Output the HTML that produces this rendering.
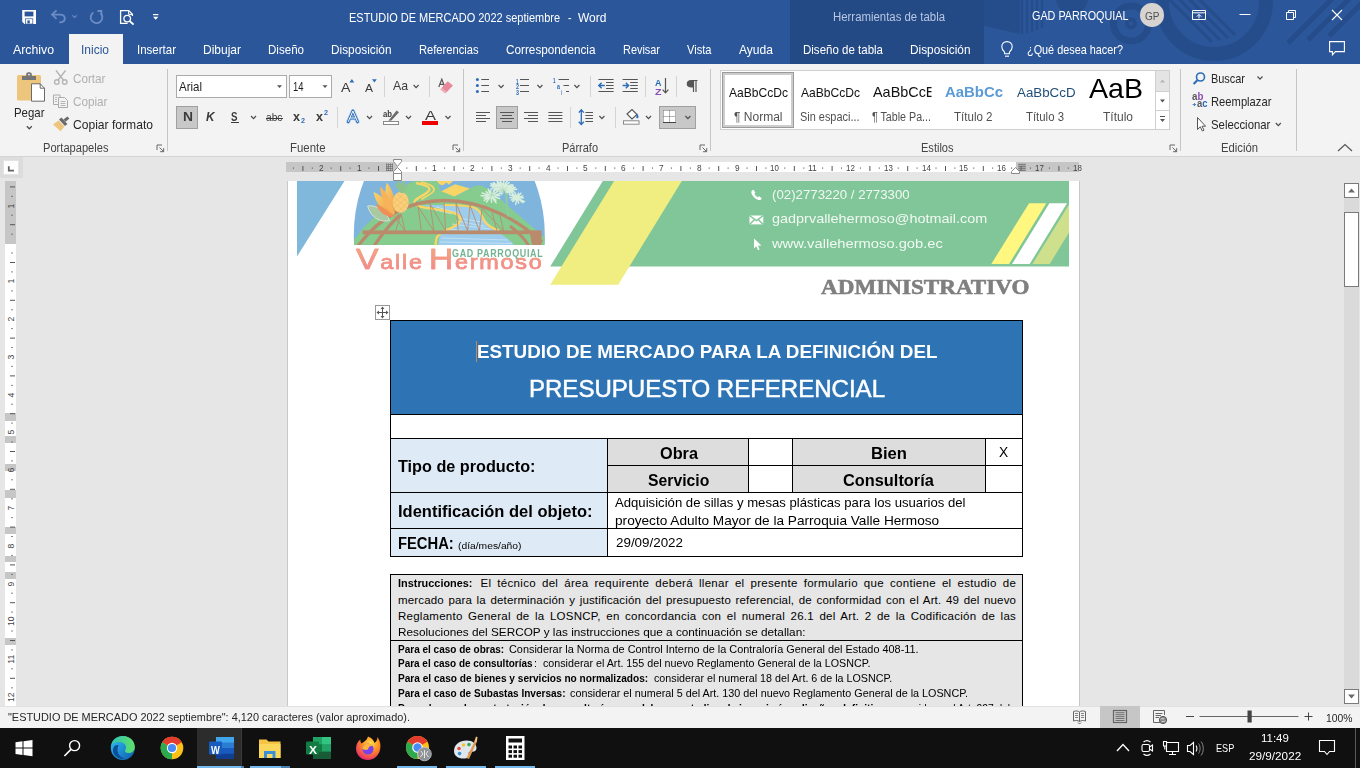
<!DOCTYPE html>
<html lang="es"><head><meta charset="utf-8"><title>ESTUDIO DE MERCADO 2022 septiembre - Word</title>
<style>
html,body{margin:0;padding:0;}
body{width:1360px;height:768px;overflow:hidden;position:relative;background:#e6e6e6;font-family:"Liberation Sans",sans-serif;}
div,span.t,svg{position:absolute;}
span.t{display:block;}
svg{overflow:visible;}
.clip{overflow:hidden;}
</style></head>
<body>
<!-- sec_title -->
<div style="left:0px;top:0px;width:1360px;height:64px;background:#2b579a;"></div>
<svg style="left:0px;top:0px;overflow:hidden;" width="1360" height="64" viewBox="0 0 1360 64">
<g fill="none" stroke="#264d8b">
 <circle cx="1214" cy="2" r="52" stroke-width="14"/>
 <circle cx="1131" cy="23.5" r="17.5" stroke-width="7"/>
 <circle cx="1131" cy="23.5" r="4" stroke-width="4"/>
 <circle cx="880" cy="74" r="60" stroke-width="5"/>
</g>
<g stroke="#264d8b" stroke-width="3">
 <path d="M1168 -2L1212 42M1178 -2L1220 40M1188 -2L1228 38M1198 -2L1235 35"/>
</g>
<g stroke="#264d8b" stroke-width="5">
 <path d="M1288 43L1333 -2M1308 40L1350 -2M1329 36L1366 -1"/>
</g>
<g stroke="#264d8b" stroke-width="2.4">
 <path d="M1022 0V34M1027 0V33M1032 0V32M1037 0V30M1042 0V28"/>
</g>
<path d="M984 0H1020V34L984 26Z" fill="#264d8b"/>
<circle cx="1072" cy="-2" r="16" fill="#264d8b"/>
</svg>
<div style="left:790px;top:0px;width:194px;height:64px;background:#244a85;"></div>
<div style="left:69px;top:34px;width:54px;height:30px;background:#f3f3f3;"></div>
<span class="t" style="left:349.3px;top:12.40px;font:400 12.4px/12.4px 'Liberation Sans', sans-serif;color:#ffffff;white-space:pre;transform-origin:0 50%;transform:scaleX(0.8856);">ESTUDIO DE MERCADO 2022 septiembre</span>
<span class="t" style="left:568px;top:12.40px;font:400 12.4px/12.4px 'Liberation Sans', sans-serif;color:#ffffff;white-space:pre;transform-origin:0 50%;transform:scaleX(0.8694);">-</span>
<span class="t" style="left:578.2px;top:12.40px;font:400 12.4px/12.4px 'Liberation Sans', sans-serif;color:#ffffff;white-space:pre;transform-origin:0 50%;transform:scaleX(0.9663);">Word</span>
<span class="t" style="left:832.5px;top:10.64px;font:400 12px/12px 'Liberation Sans', sans-serif;color:#b9c7e2;white-space:pre;transform-origin:0 50%;transform:scaleX(0.9487);">Herramientas de tabla</span>
<span class="t" style="left:1031.5px;top:10.07px;font:400 12.2px/12.2px 'Liberation Sans', sans-serif;color:#ffffff;white-space:pre;transform-origin:0 50%;transform:scaleX(0.8868);">GAD PARROQUIAL</span>
<div style="left:1140px;top:3px;width:23.6px;height:23.6px;background:#d6d3d1;border-radius:50%;"></div>
<span class="t" style="left:1144.5px;top:11.33px;font:400 10.6px/10.6px 'Liberation Sans', sans-serif;color:#505050;white-space:pre;transform-origin:0 50%;transform:scaleX(0.9469);">GP</span>
<span class="t" style="left:13px;top:44.17px;font:400 12.2px/12.2px 'Liberation Sans', sans-serif;color:#ffffff;white-space:pre;transform-origin:0 50%;transform:scaleX(1.0088);">Archivo</span>
<span class="t" style="left:81px;top:44.17px;font:400 12.2px/12.2px 'Liberation Sans', sans-serif;color:#2b579a;white-space:pre;transform-origin:0 50%;transform:scaleX(0.9841);">Inicio</span>
<span class="t" style="left:137px;top:44.17px;font:400 12.2px/12.2px 'Liberation Sans', sans-serif;color:#ffffff;white-space:pre;transform-origin:0 50%;transform:scaleX(0.9437);">Insertar</span>
<span class="t" style="left:203px;top:44.17px;font:400 12.2px/12.2px 'Liberation Sans', sans-serif;color:#ffffff;white-space:pre;transform-origin:0 50%;transform:scaleX(0.9838);">Dibujar</span>
<span class="t" style="left:268px;top:44.17px;font:400 12.2px/12.2px 'Liberation Sans', sans-serif;color:#ffffff;white-space:pre;transform-origin:0 50%;transform:scaleX(0.9489);">Diseño</span>
<span class="t" style="left:331px;top:44.17px;font:400 12.2px/12.2px 'Liberation Sans', sans-serif;color:#ffffff;white-space:pre;transform-origin:0 50%;transform:scaleX(0.9707);">Disposición</span>
<span class="t" style="left:419px;top:44.17px;font:400 12.2px/12.2px 'Liberation Sans', sans-serif;color:#ffffff;white-space:pre;transform-origin:0 50%;transform:scaleX(0.9147);">Referencias</span>
<span class="t" style="left:506px;top:44.17px;font:400 12.2px/12.2px 'Liberation Sans', sans-serif;color:#ffffff;white-space:pre;transform-origin:0 50%;transform:scaleX(0.9641);">Correspondencia</span>
<span class="t" style="left:623px;top:44.17px;font:400 12.2px/12.2px 'Liberation Sans', sans-serif;color:#ffffff;white-space:pre;transform-origin:0 50%;transform:scaleX(0.8956);">Revisar</span>
<span class="t" style="left:687px;top:44.17px;font:400 12.2px/12.2px 'Liberation Sans', sans-serif;color:#ffffff;white-space:pre;transform-origin:0 50%;transform:scaleX(0.9116);">Vista</span>
<span class="t" style="left:739px;top:44.17px;font:400 12.2px/12.2px 'Liberation Sans', sans-serif;color:#ffffff;white-space:pre;transform-origin:0 50%;transform:scaleX(0.9900);">Ayuda</span>
<span class="t" style="left:802.5px;top:44.17px;font:400 12.2px/12.2px 'Liberation Sans', sans-serif;color:#ffffff;white-space:pre;transform-origin:0 50%;transform:scaleX(0.9445);">Diseño de tabla</span>
<span class="t" style="left:910px;top:44.17px;font:400 12.2px/12.2px 'Liberation Sans', sans-serif;color:#ffffff;white-space:pre;transform-origin:0 50%;transform:scaleX(0.9707);">Disposición</span>
<span class="t" style="left:1027px;top:44.17px;font:400 12.2px/12.2px 'Liberation Sans', sans-serif;color:#ffffff;white-space:pre;transform-origin:0 50%;transform:scaleX(0.8911);">¿Qué desea hacer?</span>
<svg style="left:0px;top:0px;" width="1360" height="64" viewBox="0 0 1360 64">
<g fill="none" stroke="#fff" stroke-width="1.3">
 <!-- save: drawn below as filled shapes -->
 <!-- print preview -->
 <path d="M127.6 23.4H120.6V10.6H128.8L132.4 14.2V16" />
 <path d="M128.6 10.8V14.4H132.2" stroke-width="1"/>
 <circle cx="127.2" cy="18.6" r="3.3" />
 <path d="M129.6 21L133.6 24.6" stroke-width="1.9"/>
 <!-- window controls -->
 <path d="M1239.5 14.5H1250.5" stroke-width="1"/>
 <path d="M1286.5 12.5H1293.5V19.5H1286.5Z M1288.5 12.5V10.5H1295.5V17.5H1293.5" stroke-width="1"/>
 <path d="M1332 10L1342 20M1342 10L1332 20" stroke-width="1.1"/>
 <!-- ribbon display options -->
 <path d="M1192.5 10.5H1205.5V19.5H1192.5Z M1192.5 12.8H1205.5" stroke-width="1"/>
 <path d="M1199 18.4V14.6M1196.8 16.6L1199 14.4L1201.2 16.6" stroke-width="1"/>
 <!-- lightbulb -->
 <path d="M1004.6 52.2C1002.8 50.6 1001.8 49 1001.8 46.8C1001.8 43.6 1004.2 41.6 1007 41.6C1009.8 41.6 1012.2 43.6 1012.2 46.8C1012.2 49 1011.2 50.6 1009.4 52.2V53.8H1004.6Z" stroke-width="1.1"/>
 <path d="M1005 56.2H1009" stroke-width="1.1"/>
 <!-- comments -->
 <path d="M1329.6 41.6H1344.4V51.6H1335.4L1332.4 54.8V51.6H1329.6Z" stroke-width="1.1"/>
</g>
<g fill="none" stroke="#6d8cc6" stroke-width="1.8">
 <!-- undo (disabled) -->
 <path d="M52.4 14.6H60C63.2 14.6 64.8 16.4 64.8 18.4C64.8 20.6 63 22.2 59.4 22.4" />
 <path d="M56.6 10.4L52 14.6L56.6 18.8" />
 <path d="M72.4 15.4L74.6 17.4L76.8 15.4" stroke-width="1.1"/>
 <!-- redo (disabled) -->
 <path d="M100.6 13.2A5.8 5.8 0 1 1 93.4 12.4" />
 <path d="M97.4 11H101.4V15" />
</g>
<path d="M22.2 10H36V24H24.4L22.2 21.8Z" fill="#fff"/><rect x="24.6" y="11.6" width="8.8" height="4.8" fill="#2b579a"/><rect x="25.4" y="18.8" width="7.4" height="5.2" fill="none" stroke="#2b579a" stroke-width="0.7"/><rect x="27.4" y="20.4" width="2.4" height="2.9" fill="#2b579a"/>
<g fill="#fff">
 <rect x="153" y="14" width="5.4" height="1.2"/>
 <path d="M153 16.8H158.4L155.7 19.8Z"/>
</g>
</svg>
<!-- sec_ribbon -->
<div style="left:0px;top:64px;width:1360px;height:92px;background:#f3f3f3;"></div>
<div style="left:0px;top:156px;width:1360px;height:1px;background:#d4d4d4;"></div>
<div style="left:167.0px;top:69px;width:1px;height:82px;background:#c6c6c6;"></div>
<div style="left:463.0px;top:69px;width:1px;height:82px;background:#c6c6c6;"></div>
<div style="left:710.0px;top:69px;width:1px;height:82px;background:#c6c6c6;"></div>
<div style="left:1179.5px;top:69px;width:1px;height:82px;background:#c6c6c6;"></div>
<div style="left:1296.0px;top:69px;width:1px;height:82px;background:#c6c6c6;"></div>
<div style="left:384.0px;top:76px;width:1px;height:21px;background:#d4d4d4;"></div>
<div style="left:429.0px;top:76px;width:1px;height:21px;background:#d4d4d4;"></div>
<div style="left:590.0px;top:76px;width:1px;height:21px;background:#d4d4d4;"></div>
<div style="left:645.0px;top:76px;width:1px;height:21px;background:#d4d4d4;"></div>
<div style="left:676.0px;top:76px;width:1px;height:21px;background:#d4d4d4;"></div>
<div style="left:337.0px;top:107px;width:1px;height:21px;background:#d4d4d4;"></div>
<div style="left:570.0px;top:107px;width:1px;height:21px;background:#d4d4d4;"></div>
<div style="left:614.5px;top:107px;width:1px;height:21px;background:#d4d4d4;"></div>
<span class="t" style="left:14px;top:107.07px;font:400 12.2px/12.2px 'Liberation Sans', sans-serif;color:#262626;white-space:pre;transform-origin:0 50%;transform:scaleX(0.9376);">Pegar</span>
<span class="t" style="left:72.5px;top:73.07px;font:400 12.2px/12.2px 'Liberation Sans', sans-serif;color:#b0b0b0;white-space:pre;transform-origin:0 50%;transform:scaleX(0.9594);">Cortar</span>
<span class="t" style="left:72.5px;top:96.07px;font:400 12.2px/12.2px 'Liberation Sans', sans-serif;color:#b0b0b0;white-space:pre;transform-origin:0 50%;transform:scaleX(0.9608);">Copiar</span>
<span class="t" style="left:72.5px;top:119.27px;font:400 12.2px/12.2px 'Liberation Sans', sans-serif;color:#262626;white-space:pre;transform-origin:0 50%;transform:scaleX(0.9924);">Copiar formato</span>
<span class="t" style="left:42.5px;top:142.34px;font:400 12px/12px 'Liberation Sans', sans-serif;color:#444444;white-space:pre;transform-origin:0 50%;transform:scaleX(0.9262);">Portapapeles</span>
<span class="t" style="left:290px;top:142.34px;font:400 12px/12px 'Liberation Sans', sans-serif;color:#444444;white-space:pre;transform-origin:0 50%;transform:scaleX(0.9502);">Fuente</span>
<span class="t" style="left:561.5px;top:142.34px;font:400 12px/12px 'Liberation Sans', sans-serif;color:#444444;white-space:pre;transform-origin:0 50%;transform:scaleX(0.9146);">Párrafo</span>
<span class="t" style="left:921px;top:142.34px;font:400 12px/12px 'Liberation Sans', sans-serif;color:#444444;white-space:pre;transform-origin:0 50%;transform:scaleX(0.9195);">Estilos</span>
<span class="t" style="left:1220.5px;top:142.34px;font:400 12px/12px 'Liberation Sans', sans-serif;color:#444444;white-space:pre;transform-origin:0 50%;transform:scaleX(0.9401);">Edición</span>
<div style="left:176px;top:75px;width:110.5px;height:22.5px;background:#fff;box-sizing:border-box;border:1px solid #ababab;"></div>
<div style="left:289px;top:75px;width:42.7px;height:22.5px;background:#fff;box-sizing:border-box;border:1px solid #ababab;"></div>
<span class="t" style="left:179px;top:81.17px;font:400 12.2px/12.2px 'Liberation Sans', sans-serif;color:#1e1e1e;white-space:pre;transform-origin:0 50%;transform:scaleX(0.9430);">Arial</span>
<span class="t" style="left:293px;top:81.17px;font:400 12.2px/12.2px 'Liberation Sans', sans-serif;color:#1e1e1e;white-space:pre;transform-origin:0 50%;transform:scaleX(0.7742);">14</span>
<div style="left:176px;top:106px;width:22px;height:23px;background:#c8c8c8;box-sizing:border-box;border:1px solid #a0a0a0;"></div>
<div style="left:496px;top:106px;width:22px;height:23px;background:#c8c8c8;box-sizing:border-box;border:1px solid #a0a0a0;"></div>
<div style="left:659px;top:106px;width:36.5px;height:23px;background:#c8c8c8;box-sizing:border-box;border:1px solid #a0a0a0;"></div>
<span class="t" style="left:182.5px;top:111.03px;font:700 12.6px/12.6px 'Liberation Sans', sans-serif;color:#3b3b3b;white-space:pre;transform-origin:0 50%;transform:scaleX(1.0978);">N</span>
<span class="t" style="left:206px;top:111.03px;font:italic 700 12.6px/12.6px 'Liberation Sans', sans-serif;color:#3b3b3b;white-space:pre;transform-origin:0 50%;transform:scaleX(0.9331);">K</span>
<span class="t" style="left:231px;top:110.97px;font:700 12.2px/12.2px 'Liberation Sans', sans-serif;color:#3b3b3b;white-space:pre;transform-origin:0 50%;transform:scaleX(0.7985);">S</span>
<div style="left:230.5px;top:122px;width:8px;height:1px;background:#3b3b3b;"></div>
<span class="t" style="left:266px;top:112.06px;font:400 10.8px/10.8px 'Liberation Sans', sans-serif;color:#3b3b3b;white-space:pre;transform-origin:0 50%;transform:scaleX(0.9471);">abc</span>
<div style="left:265.5px;top:117.5px;width:17.5px;height:1px;background:#3b3b3b;"></div>
<span class="t" style="left:292.5px;top:110.20px;font:700 13px/13px 'Liberation Sans', sans-serif;color:#3b3b3b;white-space:pre;transform-origin:0 50%;transform:scaleX(0.9676);">x</span>
<span class="t" style="left:300.5px;top:118.20px;font:700 6.5px/6.5px 'Liberation Sans', sans-serif;color:#2b6cb8;white-space:pre;transform-origin:0 50%;transform:scaleX(1.1034);">2</span>
<span class="t" style="left:316px;top:110.20px;font:700 13px/13px 'Liberation Sans', sans-serif;color:#3b3b3b;white-space:pre;transform-origin:0 50%;transform:scaleX(0.9676);">x</span>
<span class="t" style="left:324px;top:110.10px;font:700 6.5px/6.5px 'Liberation Sans', sans-serif;color:#2b6cb8;white-space:pre;transform-origin:0 50%;transform:scaleX(1.1034);">2</span>
<span class="t" style="left:340.5px;top:81.07px;font:400 13.5px/13.5px 'Liberation Sans', sans-serif;color:#3b3b3b;white-space:pre;transform-origin:0 50%;transform:scaleX(1.0537);">A</span>
<span class="t" style="left:365px;top:83.19px;font:400 11px/11px 'Liberation Sans', sans-serif;color:#3b3b3b;white-space:pre;transform-origin:0 50%;transform:scaleX(1.0894);">A</span>
<span class="t" style="left:392.5px;top:79.30px;font:400 13px/13px 'Liberation Sans', sans-serif;color:#3b3b3b;white-space:pre;transform-origin:0 50%;transform:scaleX(0.9430);">Aa</span>
<div style="left:720px;top:70px;width:450px;height:60px;background:#fff;box-sizing:border-box;border:1px solid #cfcfcf;"></div>
<div style="left:722px;top:72px;width:72px;height:56px;background:#fff;box-sizing:border-box;border:1px solid #9a9a9a;box-shadow:inset 0 0 0 2px #cdcdcd;"></div>
<div style="left:1155px;top:70px;width:15px;height:22px;background:#e4e4e4;box-sizing:border-box;border:1px solid #cfcfcf;"></div>
<div style="left:1155px;top:91px;width:15px;height:20px;background:#fff;box-sizing:border-box;border:1px solid #cfcfcf;"></div>
<div style="left:1155px;top:110px;width:15px;height:20px;background:#fff;box-sizing:border-box;border:1px solid #cfcfcf;"></div>
<span class="t" style="left:728.5px;top:87.27px;font:400 12.2px/12.2px 'Liberation Sans', sans-serif;color:#111;white-space:pre;transform-origin:0 50%;transform:scaleX(0.9898);">AaBbCcDc</span>
<span class="t" style="left:733.5px;top:111.34px;font:400 12px/12px 'Liberation Sans', sans-serif;color:#505050;white-space:pre;transform-origin:0 50%;transform:scaleX(1.0010);">¶ Normal</span>
<span class="t" style="left:800.5px;top:87.27px;font:400 12.2px/12.2px 'Liberation Sans', sans-serif;color:#111;white-space:pre;transform-origin:0 50%;transform:scaleX(0.9898);">AaBbCcDc</span>
<span class="t" style="left:800px;top:111.34px;font:400 12px/12px 'Liberation Sans', sans-serif;color:#505050;white-space:pre;transform-origin:0 50%;transform:scaleX(0.9101);">Sin espaci...</span>
<span class="t" style="left:872.5px;top:85.33px;font:400 14.5px/14.5px 'Liberation Sans', sans-serif;color:#111;white-space:pre;transform-origin:0 50%;transform:scaleX(0.9940);clip-path:inset(0 4px 0 0);">AaBbCcE</span>
<span class="t" style="left:872px;top:111.34px;font:400 12px/12px 'Liberation Sans', sans-serif;color:#505050;white-space:pre;transform-origin:0 50%;transform:scaleX(0.8904);">¶ Table Pa...</span>
<span class="t" style="left:944.5px;top:83.50px;font:700 15px/15px 'Liberation Sans', sans-serif;color:#5b9bd5;white-space:pre;transform-origin:0 50%;transform:scaleX(0.9938);">AaBbCc</span>
<span class="t" style="left:954px;top:111.34px;font:400 12px/12px 'Liberation Sans', sans-serif;color:#505050;white-space:pre;transform-origin:0 50%;transform:scaleX(0.9617);">Título 2</span>
<span class="t" style="left:1016.5px;top:85.53px;font:400 13.2px/13.2px 'Liberation Sans', sans-serif;color:#1f4e79;white-space:pre;transform-origin:0 50%;transform:scaleX(1.0103);">AaBbCcD</span>
<span class="t" style="left:1026px;top:111.34px;font:400 12px/12px 'Liberation Sans', sans-serif;color:#505050;white-space:pre;transform-origin:0 50%;transform:scaleX(0.9493);">Título 3</span>
<span class="t" style="left:1089px;top:74.80px;font:400 28px/28px 'Liberation Sans', sans-serif;color:#000;white-space:pre;transform-origin:0 50%;transform:scaleX(1.0201);">AaB</span>
<span class="t" style="left:1102.5px;top:111.34px;font:400 12px/12px 'Liberation Sans', sans-serif;color:#505050;white-space:pre;transform-origin:0 50%;transform:scaleX(0.9995);">Título</span>
<span class="t" style="left:1211.2px;top:73.17px;font:400 12.2px/12.2px 'Liberation Sans', sans-serif;color:#262626;white-space:pre;transform-origin:0 50%;transform:scaleX(0.8962);">Buscar</span>
<span class="t" style="left:1211.2px;top:95.97px;font:400 12.2px/12.2px 'Liberation Sans', sans-serif;color:#262626;white-space:pre;transform-origin:0 50%;transform:scaleX(0.9191);">Reemplazar</span>
<span class="t" style="left:1211.2px;top:118.77px;font:400 12.2px/12.2px 'Liberation Sans', sans-serif;color:#262626;white-space:pre;transform-origin:0 50%;transform:scaleX(0.9327);">Seleccionar</span>
<svg style="left:0px;top:0px;" width="1360" height="156" viewBox="0 0 1360 156"><rect x="17" y="75" width="24" height="25.5" rx="1.5" fill="#eec57c"/>
<path d="M22 80V76H26.2V74C26.2 72.8 27.4 72.2 29 72.2C30.6 72.2 31.8 72.8 31.8 74V76H36V80Z" fill="#767676"/>
<circle cx="29" cy="74.6" r="0.9" fill="#f3f3f3"/>
<path d="M31.5 83.8H40.2L44.5 88.2V101.2H31.5Z" fill="#fff" stroke="#6a6a6a" stroke-width="1"/>
<path d="M40.2 83.8V88.2H44.5" fill="none" stroke="#6a6a6a" stroke-width="1"/>
<path d="M26.8 126.2L29.3 128.8L31.8 126.2" fill="none" stroke="#4f4f4f" stroke-width="1.25"/>
<g fill="none" stroke="#b5b5b5" stroke-width="1.4"><path d="M56 70.5L63.8 80.5M65.5 70.5L57.7 80.5"/><circle cx="56.8" cy="82" r="2.3"/><circle cx="64.7" cy="82" r="2.3"/></g>
<g fill="#f3f3f3" stroke="#ababab" stroke-width="1"><path d="M53.5 95H60V104.5H53.5Z"/><path d="M58.5 97.5H64.5L67.5 100.5V107.5H58.5Z"/></g><path d="M55 97.5H57M55 99.5H57M55 101.5H57M60.5 101.5H65.5M60.5 103.5H65.5M60.5 105.5H65.5" stroke="#b5b5b5" stroke-width="1"/>
<path d="M53 124.4L58.6 120.6L64.4 126.6L60.6 131.2Z" fill="#eec57c"/><path d="M59 119.6L61.4 117.6L67.4 124L65 126Z" fill="#6a6a6a"/><path d="M63.4 119.6L67.4 116.4L69.4 118.6L65.6 121.8Z" fill="#6a6a6a"/>
<path d="M157.0 150.0V145.0H162.0" fill="none" stroke="#666" stroke-width="1"/><path d="M159.5 147.5L163.5 151.5M163.7 148.1V151.7H160.1" fill="none" stroke="#666" stroke-width="1"/>
<path d="M453.0 150.0V145.0H458.0" fill="none" stroke="#666" stroke-width="1"/><path d="M455.5 147.5L459.5 151.5M459.7 148.1V151.7H456.1" fill="none" stroke="#666" stroke-width="1"/>
<path d="M700.0 150.0V145.0H705.0" fill="none" stroke="#666" stroke-width="1"/><path d="M702.5 147.5L706.5 151.5M706.7 148.1V151.7H703.1" fill="none" stroke="#666" stroke-width="1"/>
<path d="M1170.0 150.0V145.0H1175.0" fill="none" stroke="#666" stroke-width="1"/><path d="M1172.5 147.5L1176.5 151.5M1176.7 148.1V151.7H1173.1" fill="none" stroke="#666" stroke-width="1"/>
<path d="M277 85.2H282L279.5 88Z" fill="#555"/><path d="M322.5 85.2H327.5L325 88Z" fill="#555"/>
<path d="M251 116L253.5 118.6L256 116" fill="none" stroke="#4f4f4f" stroke-width="1.25"/>
<path d="M413.6 85L416.1 87.6L418.6 85" fill="none" stroke="#4f4f4f" stroke-width="1.25"/>
<path d="M367 116L369.5 118.6L372 116" fill="none" stroke="#4f4f4f" stroke-width="1.25"/>
<path d="M406 116L408.5 118.6L411 116" fill="none" stroke="#4f4f4f" stroke-width="1.25"/>
<path d="M445.5 116L448.0 118.6L450.5 116" fill="none" stroke="#4f4f4f" stroke-width="1.25"/>
<path d="M498.6 85L501.1 87.6L503.6 85" fill="none" stroke="#4f4f4f" stroke-width="1.25"/>
<path d="M537.4 85L539.9 87.6L542.4 85" fill="none" stroke="#4f4f4f" stroke-width="1.25"/>
<path d="M574.4 85L576.9 87.6L579.4 85" fill="none" stroke="#4f4f4f" stroke-width="1.25"/>
<path d="M599.4 116L601.9 118.6L604.4 116" fill="none" stroke="#4f4f4f" stroke-width="1.25"/>
<path d="M646 116L648.5 118.6L651 116" fill="none" stroke="#4f4f4f" stroke-width="1.25"/>
<path d="M685.4 116L687.9 118.6L690.4 116" fill="none" stroke="#4f4f4f" stroke-width="1.25"/>
<path d="M1257.5 76.5L1260.0 79.1L1262.5 76.5" fill="none" stroke="#4f4f4f" stroke-width="1.25"/>
<path d="M1275.8 123L1278.3 125.6L1280.8 123" fill="none" stroke="#4f4f4f" stroke-width="1.25"/>
<path d="M349.5 82.5H354.3L351.9 79Z" fill="#2b6cb8"/><path d="M372 79.2H376.8L374.4 82.5Z" fill="#2b6cb8"/>
<path d="M438.8 87L441.8 79.2L444.8 87M439.8 84.4H443.8" fill="none" stroke="#5a5a5a" stroke-width="1.2"/><path d="M447.6 81.3L453 85.6L446.6 92.2L441.6 88Z" fill="#e8899a"/><path d="M441.6 88L446.6 92.2L445.2 93.6L440.2 89.4Z" fill="#f0aab6"/>
<path d="M348.2 121.8L352.9 111L357.6 121.8M350 118H355.8" fill="none" stroke="#c3dbf3" stroke-width="4.4" stroke-linejoin="round" stroke-linecap="round"/><path d="M348.2 121.8L352.9 111L357.6 121.8M350 118H355.8" fill="none" stroke="#2b6cb8" stroke-width="2.8" stroke-linejoin="round" stroke-linecap="round"/><path d="M348.2 121.8L352.9 111L357.6 121.8M350 118H355.8" fill="none" stroke="#fff" stroke-width="1"/>
<rect x="383.5" y="121.5" width="15" height="3" fill="#fff" stroke="#8a8a8a" stroke-width="1"/><path d="M396.6 110.4L399 112.2L391.4 120.6L388.4 120.8Z" fill="#6a6a6a"/>
<rect x="422" y="121" width="16" height="4" fill="#ee0000"/>
<circle cx="477.4" cy="79.5" r="1.5" fill="#2b6cb8"/><path d="M481.3 79.5H489" stroke="#555" stroke-width="1"/>
<path d="M520 79.5H529" stroke="#555" stroke-width="1"/>
<circle cx="477.4" cy="85.5" r="1.5" fill="#2b6cb8"/><path d="M481.3 85.5H489" stroke="#555" stroke-width="1"/>
<path d="M520 85.5H529" stroke="#555" stroke-width="1"/>
<circle cx="477.4" cy="91.5" r="1.5" fill="#2b6cb8"/><path d="M481.3 91.5H489" stroke="#555" stroke-width="1"/>
<path d="M520 91.5H529" stroke="#555" stroke-width="1"/>
<path d="M558.5 79.5H569M563.5 85.5H569M566 91.5H569" stroke="#555" stroke-width="1"/>
<path d="M598.4 79.5H613.6M606.0 82.5H613.6M606.0 85.5H613.6M606.0 88.5H613.6M598.4 91.5H613.6" stroke="#555" stroke-width="1"/>
<path d="M604.8 85.5H599.0M601.6 82.8L598.8 85.5L601.6 88.2" stroke="#2b6cb8" stroke-width="1.4" fill="none"/>
<path d="M622.6 79.5H637.8000000000001M630.2 82.5H637.8000000000001M630.2 85.5H637.8000000000001M630.2 88.5H637.8000000000001M622.6 91.5H637.8000000000001" stroke="#555" stroke-width="1"/>
<path d="M622.6 85.5H628.4M625.8000000000001 82.8L628.6 85.5L625.8000000000001 88.2" stroke="#2b6cb8" stroke-width="1.4" fill="none"/>
<path d="M665.5 78V92.5M662.6 89.6L665.5 92.8L668.4 89.6" stroke="#555" stroke-width="1.2" fill="none"/>
<path d="M476.0 112.5H490.0M476.0 115.5H486.0M476.0 118.5H490.0M476.0 121.5H486.0" stroke="#555" stroke-width="1"/>
<path d="M500.0 112.5H514.0M502.0 115.5H512.0M500.0 118.5H514.0M502.0 121.5H512.0" stroke="#555" stroke-width="1"/>
<path d="M524.0 112.5H538.0M528.0 115.5H538.0M524.0 118.5H538.0M528.0 121.5H538.0" stroke="#555" stroke-width="1"/>
<path d="M548.4 112.5H562.4M548.4 115.5H562.4M548.4 118.5H562.4M548.4 121.5H562.4" stroke="#555" stroke-width="1"/>
<path d="M585.4 112.5H593.0M585.4 115.5H593.0M585.4 118.5H593.0M585.4 121.5H593.0" stroke="#555" stroke-width="1"/>
<path d="M581.3 110V124.4M578.8 112.6L581.3 109.8L583.8 112.6M578.8 121.8L581.3 124.6L583.8 121.8" stroke="#2b6cb8" stroke-width="1.3" fill="none"/>
<rect x="623.5" y="120.8" width="15.5" height="3.4" fill="#fff" stroke="#8a8a8a" stroke-width="1"/><path d="M627 114L632 109.5L637 114.5L632 119Z" fill="#fff" stroke="#555" stroke-width="1.1"/><path d="M637 113.5C638.6 115.5 639 117 638 118C637 118.8 635.8 118 636.4 116.4Z" fill="#2b6cb8"/>
<rect x="663" y="110" width="13" height="12.5" fill="#fff"/><path d="M663.5 110.5H675.5M663.5 110.5V122M675.5 110.5V122M669.5 110.5V122M663.5 116.5H675.5" fill="none" stroke="#666" stroke-width="1" stroke-dasharray="1 1"/><path d="M663 122.5H676" stroke="#444" stroke-width="1"/>
<path d="M693.5 92V80.5M696 92V80.5M697.5 80.5H691.5C688.8 80.5 687.3 82 687.3 83.8C687.3 85.6 688.8 87 691.5 87H693.5" fill="none" stroke="#555" stroke-width="1.2"/><path d="M691.5 80.5C688.8 80.5 687.3 82 687.3 83.8C687.3 85.6 688.8 87 691.5 87H693.5V80.5Z" fill="#555"/>
<path d="M1160 82.5H1165L1162.5 79.5Z" fill="#b5b5b5"/><path d="M1160 99.5H1165L1162.5 102.5Z" fill="#555"/><path d="M1160 116.5H1165" stroke="#555" stroke-width="1"/><path d="M1160 119H1165L1162.5 122Z" fill="#555"/><path d="M1192.6 104.6H1195.4M1194 103.2L1195.6 104.6L1194 106" stroke="#2b6cb8" stroke-width="0.9" fill="none"/>
<circle cx="1200.5" cy="77" r="4" fill="none" stroke="#2b6cb8" stroke-width="1.6"/><path d="M1197.6 80L1193.6 84" stroke="#2b6cb8" stroke-width="2"/>
<path d="M1197.5 117.5V129.5L1200.3 126.8L1202.3 131L1204 130.2L1202 126.2H1205.6Z" fill="#fff" stroke="#555" stroke-width="1"/>
<path d="M1338 151L1345 144.5L1352 151" fill="none" stroke="#555" stroke-width="1.2"/></svg>
<span class="t" style="left:425px;top:109.82px;font:400 12.5px/12.5px 'Liberation Sans', sans-serif;color:#3b3b3b;white-space:pre;transform-origin:0 50%;transform:scaleX(1.3184);">A</span>
<span class="t" style="left:383px;top:110.22px;font:700 8.6px/8.6px 'Liberation Sans', sans-serif;color:#3b3b3b;white-space:pre;transform-origin:0 50%;transform:scaleX(0.8972);">ab</span>
<span class="t" style="left:516px;top:78.50px;font:700 6.5px/6.5px 'Liberation Sans', sans-serif;color:#2b6cb8;white-space:pre;transform-origin:0 50%;transform:scaleX(0.6897);">1</span>
<span class="t" style="left:516px;top:84.00px;font:700 6.5px/6.5px 'Liberation Sans', sans-serif;color:#2b6cb8;white-space:pre;transform-origin:0 50%;transform:scaleX(0.8276);">2</span>
<span class="t" style="left:516px;top:89.50px;font:700 6.5px/6.5px 'Liberation Sans', sans-serif;color:#2b6cb8;white-space:pre;transform-origin:0 50%;transform:scaleX(0.8276);">3</span>
<span class="t" style="left:553px;top:78.00px;font:700 6.5px/6.5px 'Liberation Sans', sans-serif;color:#2b6cb8;white-space:pre;transform-origin:0 50%;transform:scaleX(0.6897);">1</span>
<span class="t" style="left:557px;top:84.00px;font:700 6.5px/6.5px 'Liberation Sans', sans-serif;color:#2b6cb8;white-space:pre;transform-origin:0 50%;transform:scaleX(0.8276);">a</span>
<span class="t" style="left:561px;top:90.00px;font:700 6.5px/6.5px 'Liberation Sans', sans-serif;color:#2b6cb8;white-space:pre;transform-origin:0 50%;transform:scaleX(0.5517);">i</span>
<span class="t" style="left:655px;top:78.46px;font:700 9.5px/9.5px 'Liberation Sans', sans-serif;color:#2b6cb8;white-space:pre;transform-origin:0 50%;transform:scaleX(0.9455);">A</span>
<span class="t" style="left:655px;top:86.96px;font:700 9.5px/9.5px 'Liberation Sans', sans-serif;color:#8a4fb5;white-space:pre;transform-origin:0 50%;transform:scaleX(1.1183);">Z</span>
<span class="t" style="left:1192.2px;top:92.20px;font:700 10.4px/10.4px 'Liberation Sans', sans-serif;color:#8a4fb5;white-space:pre;transform-origin:0 50%;transform:scaleX(0.9390);"><span style="color:#5a5a5a">a</span>b</span>
<span class="t" style="left:1197.3px;top:99.30px;font:700 10.4px/10.4px 'Liberation Sans', sans-serif;color:#2b6cb8;white-space:pre;transform-origin:0 50%;transform:scaleX(0.9081);"><span style="color:#5a5a5a">a</span>c</span>
<!-- sec_doc -->
<div style="left:0px;top:157px;width:1360px;height:549px;background:#e6e6e6;"></div>
<div style="left:286px;top:162px;width:793px;height:10px;background:#c6c6c6;"></div>
<div style="left:397px;top:162px;width:618.5px;height:10px;background:#ffffff;"></div>
<span class="t" style="left:318.8px;top:164.22px;font:400 8.6px/8.6px 'Liberation Sans', sans-serif;color:#444;white-space:pre;transform-origin:0 50%;transform:scaleX(0.9621);">2</span>
<span class="t" style="left:356.6px;top:164.22px;font:400 8.6px/8.6px 'Liberation Sans', sans-serif;color:#444;white-space:pre;transform-origin:0 50%;transform:scaleX(0.9621);">1</span>
<span class="t" style="left:432.2px;top:164.22px;font:400 8.6px/8.6px 'Liberation Sans', sans-serif;color:#444;white-space:pre;transform-origin:0 50%;transform:scaleX(0.9621);">1</span>
<span class="t" style="left:470.0px;top:164.22px;font:400 8.6px/8.6px 'Liberation Sans', sans-serif;color:#444;white-space:pre;transform-origin:0 50%;transform:scaleX(0.9621);">2</span>
<span class="t" style="left:507.8px;top:164.22px;font:400 8.6px/8.6px 'Liberation Sans', sans-serif;color:#444;white-space:pre;transform-origin:0 50%;transform:scaleX(0.9621);">3</span>
<span class="t" style="left:545.6px;top:164.22px;font:400 8.6px/8.6px 'Liberation Sans', sans-serif;color:#444;white-space:pre;transform-origin:0 50%;transform:scaleX(0.9621);">4</span>
<span class="t" style="left:583.4px;top:164.22px;font:400 8.6px/8.6px 'Liberation Sans', sans-serif;color:#444;white-space:pre;transform-origin:0 50%;transform:scaleX(0.9621);">5</span>
<span class="t" style="left:621.2px;top:164.22px;font:400 8.6px/8.6px 'Liberation Sans', sans-serif;color:#444;white-space:pre;transform-origin:0 50%;transform:scaleX(0.9621);">6</span>
<span class="t" style="left:659.0px;top:164.22px;font:400 8.6px/8.6px 'Liberation Sans', sans-serif;color:#444;white-space:pre;transform-origin:0 50%;transform:scaleX(0.9621);">7</span>
<span class="t" style="left:696.8px;top:164.22px;font:400 8.6px/8.6px 'Liberation Sans', sans-serif;color:#444;white-space:pre;transform-origin:0 50%;transform:scaleX(0.9621);">8</span>
<span class="t" style="left:734.6px;top:164.22px;font:400 8.6px/8.6px 'Liberation Sans', sans-serif;color:#444;white-space:pre;transform-origin:0 50%;transform:scaleX(0.9621);">9</span>
<span class="t" style="left:770.3px;top:164.22px;font:400 8.6px/8.6px 'Liberation Sans', sans-serif;color:#444;white-space:pre;transform-origin:0 50%;transform:scaleX(0.9203);">10</span>
<span class="t" style="left:808.1px;top:164.22px;font:400 8.6px/8.6px 'Liberation Sans', sans-serif;color:#444;white-space:pre;transform-origin:0 50%;transform:scaleX(0.9863);">11</span>
<span class="t" style="left:845.9px;top:164.22px;font:400 8.6px/8.6px 'Liberation Sans', sans-serif;color:#444;white-space:pre;transform-origin:0 50%;transform:scaleX(0.9203);">12</span>
<span class="t" style="left:883.7px;top:164.22px;font:400 8.6px/8.6px 'Liberation Sans', sans-serif;color:#444;white-space:pre;transform-origin:0 50%;transform:scaleX(0.9203);">13</span>
<span class="t" style="left:921.5px;top:164.22px;font:400 8.6px/8.6px 'Liberation Sans', sans-serif;color:#444;white-space:pre;transform-origin:0 50%;transform:scaleX(0.9203);">14</span>
<span class="t" style="left:959.3px;top:164.22px;font:400 8.6px/8.6px 'Liberation Sans', sans-serif;color:#444;white-space:pre;transform-origin:0 50%;transform:scaleX(0.9203);">15</span>
<span class="t" style="left:997.1px;top:164.22px;font:400 8.6px/8.6px 'Liberation Sans', sans-serif;color:#444;white-space:pre;transform-origin:0 50%;transform:scaleX(0.9203);">16</span>
<span class="t" style="left:1034.9px;top:164.22px;font:400 8.6px/8.6px 'Liberation Sans', sans-serif;color:#444;white-space:pre;transform-origin:0 50%;transform:scaleX(0.9203);">17</span>
<span class="t" style="left:1072.7px;top:164.22px;font:400 8.6px/8.6px 'Liberation Sans', sans-serif;color:#444;white-space:pre;transform-origin:0 50%;transform:scaleX(0.9203);">18</span>
<svg style="left:0px;top:0px;" width="1360" height="200" viewBox="0 0 1360 200"><path d="M293.4 167.5V168.7M302.9 166V171M312.3 167.5V168.7M331.2 167.5V168.7M340.7 166V171M350.1 167.5V168.7M369.0 167.5V168.7M378.5 166V171M387.9 167.5V168.7M406.8 167.5V168.7M416.3 166V171M425.8 167.5V168.7M444.6 167.5V168.7M454.1 166V171M463.5 167.5V168.7M482.4 167.5V168.7M491.9 166V171M501.3 167.5V168.7M520.2 167.5V168.7M529.7 166V171M539.1 167.5V168.7M558.0 167.5V168.7M567.5 166V171M576.9 167.5V168.7M595.8 167.5V168.7M605.3 166V171M614.8 167.5V168.7M633.6 167.5V168.7M643.1 166V171M652.5 167.5V168.7M671.4 167.5V168.7M680.9 166V171M690.3 167.5V168.7M709.2 167.5V168.7M718.7 166V171M728.1 167.5V168.7M747.0 167.5V168.7M756.5 166V171M765.9 167.5V168.7M784.8 167.5V168.7M794.3 166V171M803.8 167.5V168.7M822.6 167.5V168.7M832.1 166V171M841.5 167.5V168.7M860.4 167.5V168.7M869.9 166V171M879.3 167.5V168.7M898.2 167.5V168.7M907.7 166V171M917.1 167.5V168.7M936.0 167.5V168.7M945.5 166V171M954.9 167.5V168.7M973.8 167.5V168.7M983.3 166V171M992.7 167.5V168.7M1011.6 167.5V168.7M1021.1 166V171M1030.5 167.5V168.7M1049.4 167.5V168.7M1058.9 166V171M1068.3 167.5V168.7" stroke="#555" stroke-width="1" fill="none"/><path d="M386 164.5H393M386 166.5H393M386 168.5H393M386 170.5H393M386.5 163.5V171M388.5 163.5V171M390.5 163.5V171M392.5 163.5V171" stroke="#6e6e6e" stroke-width="0.7" fill="none"/><path d="M1018.5 164.5H1025.5M1018.5 166.5H1025.5M1018.5 168.5H1025.5M1018.5 170.5H1025.5M1019.0 163.5V171M1021.0 163.5V171M1023.0 163.5V171M1025.0 163.5V171" stroke="#6e6e6e" stroke-width="0.7" fill="none"/><path d="M393.5 159.5H401.5V161.5L397.5 166.5L393.5 161.5Z" fill="#fff" stroke="#8a8a8a" stroke-width="1"/><path d="M393.5 173.5V171.5L397.5 167.5L401.5 171.5V173.5Z" fill="#fff" stroke="#8a8a8a" stroke-width="1"/><path d="M393.5 173.5H401.5V180.5H393.5Z" fill="#fff" stroke="#8a8a8a" stroke-width="1"/><path d="M1011.5 173.5V171.5L1015.5 167.5L1019.5 171.5V173.5Z" fill="#fff" stroke="#8a8a8a" stroke-width="1"/></svg>
<div style="left:5px;top:181px;width:11px;height:525px;background:#ffffff;"></div>
<div style="left:5px;top:181px;width:11px;height:63px;background:#c6c6c6;"></div>
<div style="left:5px;top:413px;width:11px;height:7.5px;background:#c6c6c6;"></div>
<div style="left:5px;top:435.5px;width:11px;height:7.5px;background:#c6c6c6;"></div>
<div style="left:5px;top:463.5px;width:11px;height:7.5px;background:#c6c6c6;"></div>
<div style="left:5px;top:490px;width:11px;height:8px;background:#c6c6c6;"></div>
<div style="left:5px;top:526.5px;width:11px;height:7.5px;background:#c6c6c6;"></div>
<div style="left:5px;top:555.5px;width:11px;height:6.5px;background:#c6c6c6;"></div>
<div style="left:5px;top:572px;width:11px;height:7px;background:#c6c6c6;"></div>
<div style="left:5px;top:638px;width:11px;height:7px;background:#c6c6c6;"></div>
<div style="left:0px;top:157px;width:23px;height:21px;background:#dcdcdc;"></div>
<div style="left:3px;top:160px;width:16px;height:15px;background:#fff;box-sizing:border-box;border:1px solid #e4e4e4;"></div>
<span class="t" style="left:9.3px;top:201.5px;width:4.6px;text-align:center;font:8.6px/8.6px 'Liberation Sans', sans-serif;color:#444;transform:rotate(-90deg);">1</span>
<span class="t" style="left:9.3px;top:277.1px;width:4.6px;text-align:center;font:8.6px/8.6px 'Liberation Sans', sans-serif;color:#444;transform:rotate(-90deg);">1</span>
<span class="t" style="left:9.3px;top:314.9px;width:4.6px;text-align:center;font:8.6px/8.6px 'Liberation Sans', sans-serif;color:#444;transform:rotate(-90deg);">2</span>
<span class="t" style="left:9.3px;top:352.7px;width:4.6px;text-align:center;font:8.6px/8.6px 'Liberation Sans', sans-serif;color:#444;transform:rotate(-90deg);">3</span>
<span class="t" style="left:9.3px;top:390.5px;width:4.6px;text-align:center;font:8.6px/8.6px 'Liberation Sans', sans-serif;color:#444;transform:rotate(-90deg);">4</span>
<span class="t" style="left:9.3px;top:428.3px;width:4.6px;text-align:center;font:8.6px/8.6px 'Liberation Sans', sans-serif;color:#444;transform:rotate(-90deg);">5</span>
<span class="t" style="left:9.3px;top:466.1px;width:4.6px;text-align:center;font:8.6px/8.6px 'Liberation Sans', sans-serif;color:#444;transform:rotate(-90deg);">6</span>
<span class="t" style="left:9.3px;top:503.9px;width:4.6px;text-align:center;font:8.6px/8.6px 'Liberation Sans', sans-serif;color:#444;transform:rotate(-90deg);">7</span>
<span class="t" style="left:9.3px;top:541.7px;width:4.6px;text-align:center;font:8.6px/8.6px 'Liberation Sans', sans-serif;color:#444;transform:rotate(-90deg);">8</span>
<span class="t" style="left:9.3px;top:579.5px;width:4.6px;text-align:center;font:8.6px/8.6px 'Liberation Sans', sans-serif;color:#444;transform:rotate(-90deg);">9</span>
<span class="t" style="left:6.9px;top:617.3px;width:9.4px;text-align:center;font:8.6px/8.6px 'Liberation Sans', sans-serif;color:#444;transform:rotate(-90deg);">10</span>
<span class="t" style="left:6.9px;top:655.1px;width:9.4px;text-align:center;font:8.6px/8.6px 'Liberation Sans', sans-serif;color:#444;transform:rotate(-90deg);">11</span>
<span class="t" style="left:6.9px;top:692.9px;width:9.4px;text-align:center;font:8.6px/8.6px 'Liberation Sans', sans-serif;color:#444;transform:rotate(-90deg);">12</span>
<svg style="left:0px;top:0px;" width="30" height="706" viewBox="0 0 30 706"><path d="M10 186.9H15M11.3 196.3H12.7M11.3 215.2H12.7M10 224.7H15M11.3 234.2H12.7M11.3 253.0H12.7M10 262.5H15M11.3 271.9H12.7M11.3 290.9H12.7M10 300.3H15M11.3 309.8H12.7M11.3 328.6H12.7M10 338.1H15M11.3 347.5H12.7M11.3 366.4H12.7M10 375.9H15M11.3 385.4H12.7M11.3 404.2H12.7M10 413.7H15M11.3 423.1H12.7M11.3 442.0H12.7M10 451.5H15M11.3 460.9H12.7M11.3 479.8H12.7M10 489.3H15M11.3 498.8H12.7M11.3 517.6H12.7M10 527.1H15M11.3 536.5H12.7M11.3 555.4H12.7M10 564.9H15M11.3 574.4H12.7M11.3 593.2H12.7M10 602.7H15M11.3 612.1H12.7M11.3 631.0H12.7M10 640.5H15M11.3 649.9H12.7M11.3 668.8H12.7M10 678.3H15M11.3 687.8H12.7" stroke="#555" stroke-width="1" fill="none"/><path d="M8.8 166.2V170.6H14" stroke="#666" stroke-width="1.8" fill="none"/></svg>
<div style="left:287px;top:181px;width:793px;height:525px;background:#ffffff;box-sizing:border-box;border-left:1px solid #c8c8c8;border-right:1px solid #c8c8c8;"></div>
<svg style="left:0px;top:0px;" width="1360" height="300" viewBox="0 0 1360 300"><path d="M297 181H344.5L297 256.5Z" fill="#80b8dc"/><path d="M602.8 181H1069V266.5H550.2Z" fill="#80c698"/><path d="M614.1 181H681.8L618.2 284.7H550.2Z" fill="#f0ee80"/><path d="M1029.1 203.2H1046.3L1009.1 264H991.3Z" fill="#fff780"/><path d="M1049.4 203.2H1067L1029.7 264H1012.1Z" fill="#ffffff"/><path d="M1032.4 264H1049.7L1069 232.5V204.5Z" fill="#cfe08c"/><defs><clipPath id="lg"><ellipse cx="449.3" cy="235" rx="95.5" ry="120"/></clipPath><clipPath id="lr"><rect x="340" y="181" width="220" height="64"/></clipPath><linearGradient id="vh" x1="0" y1="0" x2="0" y2="1"><stop offset="0" stop-color="#f3a57e"/><stop offset="1" stop-color="#f0808e"/></linearGradient><linearGradient id="fl" x1="0" y1="0" x2="1" y2="1"><stop offset="0" stop-color="#f7d46c"/><stop offset="1" stop-color="#f29a48"/></linearGradient></defs><g clip-path="url(#lr)"><g clip-path="url(#lg)"><rect x="340" y="181" width="220" height="64" fill="#7fb5dc"/><path d="M350 245L364 227C378 215 390 200 402 188C408 183 412 181 416 181H437L441 191L455 196.5L470 188.5C474 186 477 185 480 185.5C486 186.5 492 192 500 199L545 238V245Z" fill="#86cc8e"/><path d="M441.2 191.2L455.1 184.2L469.9 188.6L454.4 196.4Z" fill="#f8d564"/><path d="M436.8 181H453L449 184.8L446.4 182.4L443 185.2L439.6 184.6Z" fill="#f8d564"/><path d="M420 205.5C432 207 446 209 455 212.5C462 216 461 222 452 227C446 230 441 233 439.5 236.5L438 245H514C512 241 506 238 500 233C494 228 488 224 484 218C481 212 478 209 470 207.5C455 205 440 204.5 420 205.5Z" fill="#9dcdec"/><path d="M428 208L452 214M436 207L458 213M458 218L482 222M452 224L490 229M446 229L496 233M442 238L508 240M440 242L512 243.5M456 221L484 226" stroke="#c4e2f5" stroke-width="0.9" fill="none"/><path d="M416 183C424 184.5 430 186.5 429.5 189.5C429 193 420 196 415.5 200C412.5 203 416 206 424 207.5C436 209.5 450 210.5 457 214.5C463 218.5 461 223.5 452 227.5C444 231 438 234 436.5 238L435.5 245" fill="none" stroke="#f8d564" stroke-width="2.4"/><path d="M421 182C429 184 434.5 186 434 190C433.5 193.5 426 196 421.5 199.5" fill="none" stroke="#f8d564" stroke-width="1.8"/><path d="M444 205C458 205 470 205.5 476 208.5C482 212 482 218 485 222C488 226 493 228.5 499 230.5" fill="none" stroke="#f8d564" stroke-width="2.2"/><path d="M358 246C376 222 404 200.5 444 200.5C486 200.5 520 222 542 242" fill="none" stroke="#b98b6c" stroke-width="3.3"/><path d="M374 246C382 234 390 224 400 215" fill="none" stroke="#b98b6c" stroke-width="3.2"/><path d="M529 246C524 238 518 232 510 226" fill="none" stroke="#b98b6c" stroke-width="3"/><rect x="362.5" y="230.4" width="179" height="3.8" fill="#b98b6c"/><path d="M530 234H541.5V245H532Z" fill="#b98b6c"/><path d="M395.6 231L401.0 213.5M405.1 231L401.0 213.5M421.3 231L418.0 206.5M433.8 231L430.0 203.7M445.6 231L444.0 202.5M458.1 231L456.0 203.1M467.6 231L470.0 205.3M479.4 231L482.0 208.5M497.0 231L492.0 212.1M503.7 231L500.0 215.6M405.1 231L395.0 216.8M433.8 231L418.0 206.5M445.6 231L430.0 203.7M467.6 231L456.0 203.1M479.4 231L470.0 205.3M503.7 231L482.0 208.5" stroke="#b98b6c" stroke-width="0.9" fill="none"/><path d="M367.6 206C376 204.5 386 210.5 389.7 220.6C380 223 370.5 217 367.6 206Z" fill="#a9c9a3" stroke="#e9f1e6" stroke-width="0.7"/><path d="M386.8 182.4C393 190 397 203 394.5 215C387 208 383 195 386.8 182.4Z" fill="url(#fl)"/><path d="M373.5 192C382 195 391 205 394 215.5C384 213 375.5 204 373.5 192Z" fill="url(#fl)"/><path d="M380 186.5C387 192 393 204 394.2 215C386 209 380.5 198 380 186.5Z" fill="#f6b35c"/><path d="M376 204C382 206 390 212 394 217C386 217.5 378.5 212 376 204Z" fill="#f08e58"/><ellipse cx="400.7" cy="202.3" rx="8.1" ry="10.4" fill="#f8cf7c"/><path d="M394 197L407 208M393 202L404 211M396 193L408.5 203M407.5 197L394.5 208M408.5 202L398 211.5M405 193L393 203" stroke="#f2b65c" stroke-width="0.6" fill="none"/><path d="M400.7 193L394.5 184L397.5 185L397 181H399L400.7 184.5L402.5 181H405L404 185.5L409.5 183.5L403.5 193Z" fill="#8ec28c"/><path d="M491.0 196.0L499.9 195.4M491.0 196.0L499.6 198.5M491.0 196.0L496.0 200.3M491.0 196.0L496.1 202.8M491.0 196.0L491.6 202.3M491.0 196.0L486.5 202.0M491.0 196.0L484.3 200.4M491.0 196.0L483.8 198.1M491.0 196.0L481.0 195.7M491.0 196.0L482.2 193.0M491.0 196.0L486.1 191.6M491.0 196.0L488.2 189.1M491.0 196.0L490.6 190.2M491.0 196.0L495.2 189.9M491.0 196.0L498.6 190.7M491.0 196.0L500.6 193.4M503.0 187.0L513.3 186.7M503.0 187.0L513.0 190.2M503.0 187.0L507.9 191.9M503.0 187.0L507.0 192.8M503.0 187.0L501.7 194.2M503.0 187.0L499.4 193.2M503.0 187.0L496.7 192.0M503.0 187.0L494.4 190.2M503.0 187.0L492.3 186.8M503.0 187.0L493.3 183.3M503.0 187.0L496.1 180.2M503.0 187.0L500.3 180.9M503.0 187.0L504.2 178.3M503.0 187.0L507.7 180.4M503.0 187.0L509.2 182.6M503.0 187.0L512.1 184.8M517.0 198.0L523.2 197.7M517.0 198.0L524.5 201.7M517.0 198.0L522.9 202.6M517.0 198.0L518.6 203.0M517.0 198.0L515.7 204.4M517.0 198.0L512.7 201.5M517.0 198.0L511.4 200.0M517.0 198.0L510.1 197.6M517.0 198.0L509.6 194.3M517.0 198.0L511.5 192.5M517.0 198.0L515.3 193.2M517.0 198.0L518.5 193.3M517.0 198.0L520.9 193.2M517.0 198.0L522.9 195.9M497.0 186.5L504.3 185.7M497.0 186.5L503.8 189.2M497.0 186.5L499.4 191.0M497.0 186.5L497.1 191.7M497.0 186.5L493.4 191.0M497.0 186.5L491.1 189.1M497.0 186.5L490.6 185.8M497.0 186.5L490.9 183.8M497.0 186.5L493.6 182.6M497.0 186.5L497.9 181.3M497.0 186.5L499.7 182.9M497.0 186.5L502.7 183.7M510.0 190.0L516.7 189.2M510.0 190.0L514.6 192.3M510.0 190.0L513.0 194.5M510.0 190.0L509.7 194.9M510.0 190.0L506.1 194.7M510.0 190.0L505.8 192.7M510.0 190.0L502.4 189.7M510.0 190.0L504.3 187.8M510.0 190.0L507.1 185.8M510.0 190.0L509.8 185.2M510.0 190.0L513.1 185.2M510.0 190.0L515.2 187.3" stroke="#d8eedd" stroke-width="1.5" fill="none" stroke-linecap="round"/><path d="M503.0 190.0L507.5 190.3M503.0 190.0L507.2 193.5M503.0 190.0L503.3 194.0M503.0 190.0L499.2 192.6M503.0 190.0L497.6 190.4M503.0 190.0L499.9 187.2M503.0 190.0L502.7 185.8M503.0 190.0L507.2 187.3M492.0 195.0L496.0 195.3M492.0 195.0L495.2 197.9M492.0 195.0L490.5 198.4M492.0 195.0L488.6 196.6M492.0 195.0L488.3 193.6M492.0 195.0L491.3 190.9M492.0 195.0L494.3 192.2" stroke="#a9d8b6" stroke-width="0.7" fill="none"/><path d="M505 193C505.5 200 506 208 507 216.5L509.5 216.5C508 208 507.5 200 507.5 193Z" fill="#8fc9a2"/></g></g></svg>
<span class="t" style="left:356px;top:245.3px;font:400 28.8px/28.8px 'Liberation Sans', sans-serif;white-space:pre;letter-spacing:1.5px;word-spacing:-5px;background:linear-gradient(#f3a57e 20%,#f0808e 92%);-webkit-background-clip:text;background-clip:text;color:transparent;-webkit-text-stroke:0.55px #f2938a;transform-origin:0 50%;transform:scaleX(1.1691);">V<span style="font-size:20px">alle</span> H<span style="font-size:20px">ermoso</span></span>
<span class="t" style="left:452.2px;top:248.98px;font:700 10.3px/10.3px 'Liberation Sans', sans-serif;color:#73b391;white-space:pre;transform-origin:0 50%;transform:scaleX(0.8671);letter-spacing:0.8px;">GAD PARROQUIAL</span>
<span class="t" style="left:771.5px;top:188.13px;font:400 13.2px/13.2px 'Liberation Sans', sans-serif;color:#f1f9f3;white-space:pre;transform-origin:0 50%;transform:scaleX(1.0042);">(02)2773220 / 2773300</span>
<span class="t" style="left:771.5px;top:212.39px;font:400 13.6px/13.6px 'Liberation Sans', sans-serif;color:#f1f9f3;white-space:pre;transform-origin:0 50%;transform:scaleX(1.0617);">gadprvallehermoso@hotmail.com</span>
<span class="t" style="left:771.5px;top:236.69px;font:400 13.6px/13.6px 'Liberation Sans', sans-serif;color:#f1f9f3;white-space:pre;transform-origin:0 50%;transform:scaleX(1.0815);">www.vallehermoso.gob.ec</span>
<svg style="left:0px;top:0px;" width="1360" height="300" viewBox="0 0 1360 300"><path d="M752.2 190.2C751.2 191.2 751 192.6 752 194.6C753.6 197.6 756 199.6 758.6 200C760 200.2 761.2 199.4 761.8 198.4L759.4 196.2L757.8 197.2C756.4 196.6 755 195.2 754.4 193.8L755.4 192.4L753.4 189.8Z" fill="#fff"/><path d="M749.5 215.5H763.3V224.4H749.5Z" fill="#fff"/><path d="M749.5 215.5L756.4 220.6L763.3 215.5M749.5 224.4L754.6 219.4M763.3 224.4L758.2 219.4" fill="none" stroke="#80c698" stroke-width="1.4"/><path d="M754 238.4V248.4L756.4 246.2L758 250.2L759.6 249.6L758 245.8L761.4 245.6Z" fill="#fff"/></svg>
<span class="t" style="left:820.5px;top:275.88px;font:700 22px/22px 'Liberation Serif', serif;color:#7f7f7f;white-space:pre;transform-origin:0 50%;transform:scaleX(1.0509);-webkit-text-stroke:0.6px #7f7f7f;">ADMINISTRATIVO</span>
<div style="left:375px;top:305px;width:15px;height:15px;background:#fff;box-sizing:border-box;border:1px solid #999;"></div>
<svg style="left:0px;top:0px;" width="1360" height="330" viewBox="0 0 1360 330"><path d="M382.5 308V317M378 312.5H387" stroke="#555" stroke-width="1" fill="none"/><path d="M382.5 306.5L380.6 309H384.4ZM382.5 318.5L380.6 316H384.4ZM376.5 312.5L379 310.6V314.4ZM388.5 312.5L386 310.6V314.4Z" fill="#555"/></svg>
<div style="left:390px;top:320px;width:633px;height:95px;background:#2e74b5;"></div>
<div style="left:390px;top:438px;width:218px;height:119px;background:#deeaf6;"></div>
<div style="left:607px;top:438px;width:142px;height:55px;background:#dddddd;"></div>
<div style="left:792px;top:438px;width:194px;height:55px;background:#dddddd;"></div>
<div style="left:390px;top:320px;width:633px;height:1px;background:#000;"></div>
<div style="left:390px;top:414px;width:633px;height:1px;background:#000;"></div>
<div style="left:390px;top:438px;width:633px;height:1px;background:#000;"></div>
<div style="left:390px;top:492px;width:633px;height:1px;background:#000;"></div>
<div style="left:390px;top:528px;width:633px;height:1px;background:#000;"></div>
<div style="left:390px;top:556px;width:633px;height:1px;background:#000;"></div>
<div style="left:607px;top:465px;width:416px;height:1px;background:#000;"></div>
<div style="left:390px;top:320px;width:1px;height:237px;background:#000;"></div>
<div style="left:1022px;top:320px;width:1px;height:237px;background:#000;"></div>
<div style="left:607px;top:438px;width:1px;height:119px;background:#000;"></div>
<div style="left:748px;top:438px;width:1px;height:55px;background:#000;"></div>
<div style="left:792px;top:438px;width:1px;height:55px;background:#000;"></div>
<div style="left:985px;top:438px;width:1px;height:55px;background:#000;"></div>
<div style="left:476px;top:341px;width:1px;height:21px;background:#c8884a;"></div>
<span class="t" style="left:476.5px;top:342.99px;font:700 18.8px/18.8px 'Liberation Sans', sans-serif;color:#fff;white-space:pre;transform-origin:0 50%;transform:scaleX(1.0023);">ESTUDIO DE MERCADO PARA LA DEFINICIÓN DEL</span>
<span class="t" style="left:529px;top:376.68px;font:400 24px/24px 'Liberation Sans', sans-serif;color:#fff;white-space:pre;transform-origin:0 50%;transform:scaleX(1.0010);-webkit-text-stroke:0.5px #fff;">PRESUPUESTO REFERENCIAL</span>
<span class="t" style="left:398px;top:459.32px;font:700 15.57px/15.57px 'Liberation Sans', sans-serif;color:#000;white-space:pre;transform-origin:0 50%;transform:scaleX(1.0418);">Tipo de producto:</span>
<span class="t" style="left:398px;top:504.32px;font:700 15.57px/15.57px 'Liberation Sans', sans-serif;color:#000;white-space:pre;transform-origin:0 50%;transform:scaleX(1.0610);">Identificación del objeto:</span>
<span class="t" style="left:398px;top:536.32px;font:700 15.57px/15.57px 'Liberation Sans', sans-serif;color:#000;white-space:pre;transform-origin:0 50%;transform:scaleX(0.9490);">FECHA:</span>
<span class="t" style="left:458px;top:541.35px;font:400 9.63px/9.63px 'Liberation Sans', sans-serif;color:#000;white-space:pre;transform-origin:0 50%;transform:scaleX(1.0692);">(día/mes/año)</span>
<span class="t" style="left:659.5px;top:446.32px;font:700 15.57px/15.57px 'Liberation Sans', sans-serif;color:#000;white-space:pre;transform-origin:0 50%;transform:scaleX(1.0460);">Obra</span>
<span class="t" style="left:647.5px;top:472.82px;font:700 15.57px/15.57px 'Liberation Sans', sans-serif;color:#000;white-space:pre;transform-origin:0 50%;transform:scaleX(1.0122);">Servicio</span>
<span class="t" style="left:871px;top:446.32px;font:700 15.57px/15.57px 'Liberation Sans', sans-serif;color:#000;white-space:pre;transform-origin:0 50%;transform:scaleX(1.0672);">Bien</span>
<span class="t" style="left:843px;top:472.82px;font:700 15.57px/15.57px 'Liberation Sans', sans-serif;color:#000;white-space:pre;transform-origin:0 50%;transform:scaleX(1.0501);">Consultoría</span>
<span class="t" style="left:998.8px;top:445.31px;font:400 14.4px/14.4px 'Liberation Sans', sans-serif;color:#000;white-space:pre;transform-origin:0 50%;transform:scaleX(0.9574);">X</span>
<span class="t" style="left:615px;top:497.87px;font:400 11.97px/11.97px 'Liberation Sans', sans-serif;color:#000;white-space:pre;transform-origin:0 50%;transform:scaleX(1.0976);">Adquisición de sillas y mesas plásticas para los usuarios del</span>
<span class="t" style="left:615px;top:515.87px;font:400 11.97px/11.97px 'Liberation Sans', sans-serif;color:#000;white-space:pre;transform-origin:0 50%;transform:scaleX(1.1395);">proyecto Adulto Mayor de la Parroquia Valle Hermoso</span>
<span class="t" style="left:615.5px;top:538.37px;font:400 11.97px/11.97px 'Liberation Sans', sans-serif;color:#000;white-space:pre;transform-origin:0 50%;transform:scaleX(1.1184);">29/09/2022</span>
<div style="left:390px;top:574px;width:633px;height:132px;background:#e6e6e6;"></div>
<div style="left:390px;top:574px;width:633px;height:1px;background:#000;"></div>
<div style="left:390px;top:640px;width:633px;height:1px;background:#000;"></div>
<div style="left:390px;top:574px;width:1px;height:132px;background:#000;"></div>
<div style="left:1022px;top:574px;width:1px;height:132px;background:#000;"></div>
<span class="t" style="left:398px;top:578.37px;font:400 11.5px/11.5px 'Liberation Sans', sans-serif;color:#000;white-space:pre;transform-origin:0 50%;transform:scaleX(0.9477);"><b>Instrucciones:</b></span>
<span class="t" style="left:480.5px;top:578.37px;font:400 11.5px/11.5px 'Liberation Sans', sans-serif;color:#000;width:535.6px;white-space:normal;text-align:justify;text-align-last:justify;letter-spacing:0.302px;height:14.7px;overflow:hidden;">El técnico del área requirente deberá llenar el presente formulario que contiene el estudio de</span>
<span class="t" style="left:398px;top:594.67px;font:400 11.5px/11.5px 'Liberation Sans', sans-serif;color:#000;width:618.1px;white-space:normal;text-align:justify;text-align-last:justify;letter-spacing:0.144px;height:14.7px;overflow:hidden;">mercado para la determinación y justificación del presupuesto referencial, de conformidad con el Art. 49 del nuevo</span>
<span class="t" style="left:398px;top:611.37px;font:400 11.5px/11.5px 'Liberation Sans', sans-serif;color:#000;width:618.1px;white-space:normal;text-align:justify;text-align-last:justify;letter-spacing:0.253px;height:14.7px;overflow:hidden;">Reglamento  General de la LOSNCP, en concordancia con el numeral 26.1 del Art. 2 de la Codificación de las</span>
<span class="t" style="left:398px;top:627.17px;font:400 11.5px/11.5px 'Liberation Sans', sans-serif;color:#000;white-space:pre;transform-origin:0 50%;transform:scaleX(1.0237);">Resoluciones del SERCOP y las instrucciones que a continuación se detallan:</span>
<span class="t" style="left:398px;top:645.49px;font:700 10.17px/10.17px 'Liberation Sans', sans-serif;color:#000;white-space:pre;transform-origin:0 50%;transform:scaleX(0.9849);">Para el caso de obras:</span>
<span class="t" style="left:509.2px;top:645.49px;font:400 10.17px/10.17px 'Liberation Sans', sans-serif;color:#000;white-space:pre;transform-origin:0 50%;transform:scaleX(1.0722);">Considerar la Norma de Control Interno de la Contraloría General del Estado 408-11.</span>
<span class="t" style="left:398px;top:659.09px;font:700 10.17px/10.17px 'Liberation Sans', sans-serif;color:#000;white-space:pre;transform-origin:0 50%;transform:scaleX(0.9805);">Para el caso de consultorías</span>
<span class="t" style="left:533.5px;top:659.09px;font:400 10.17px/10.17px 'Liberation Sans', sans-serif;color:#000;white-space:pre;transform-origin:0 50%;transform:scaleX(1.0555);">:  considerar el Art. 155 del nuevo Reglamento General de la LOSNCP.</span>
<span class="t" style="left:398px;top:674.19px;font:700 10.17px/10.17px 'Liberation Sans', sans-serif;color:#000;white-space:pre;transform-origin:0 50%;transform:scaleX(0.9960);">Para el caso de bienes y servicios no normalizados:</span>
<span class="t" style="left:653.8px;top:674.19px;font:400 10.17px/10.17px 'Liberation Sans', sans-serif;color:#000;white-space:pre;transform-origin:0 50%;transform:scaleX(1.0557);">considerar el numeral 18 del Art. 6 de la LOSNCP.</span>
<span class="t" style="left:398px;top:689.49px;font:700 10.17px/10.17px 'Liberation Sans', sans-serif;color:#000;white-space:pre;transform-origin:0 50%;transform:scaleX(0.9889);">Para el caso de Subastas Inversas:</span>
<span class="t" style="left:570px;top:689.49px;font:400 10.17px/10.17px 'Liberation Sans', sans-serif;color:#000;white-space:pre;transform-origin:0 50%;transform:scaleX(1.0622);">considerar el numeral 5 del Art. 130 del nuevo Reglamento General de la LOSNCP.</span>
<div class="clip" style="left:390px;top:697px;width:633px;height:9px;"><span class="t" style="left:8px;top:7.09px;font:400 10.17px/10.17px 'Liberation Sans', sans-serif;color:#000;white-space:pre;transform-origin:0 50%;transform:scaleX(1.0049);"><b>Para el caso de contratación de consultoría para elaborar estudios de ingeniería y diseños definitivos:</b> considerar el Art. 227 del</span></div>
<div style="left:1344px;top:183px;width:15px;height:521px;background:#dadada;"></div>
<div style="left:1344px;top:183px;width:15px;height:15px;background:#fff;box-sizing:border-box;border:1px solid #7a7a7a;"></div>
<div style="left:1344px;top:689px;width:15px;height:15px;background:#fff;box-sizing:border-box;border:1px solid #7a7a7a;"></div>
<div style="left:1344px;top:212px;width:15px;height:75px;background:#fff;box-sizing:border-box;border:1px solid #7a7a7a;"></div>
<svg style="left:0px;top:0px;" width="1360" height="706" viewBox="0 0 1360 706"><path d="M1348 192.5H1355L1351.5 188.5Z" fill="#6a6a6a"/><path d="M1348 694.5H1355L1351.5 698.5Z" fill="#6a6a6a"/></svg>
<!-- sec_status -->
<div style="left:0px;top:706px;width:1360px;height:22px;background:#f3f3f3;"></div>
<div style="left:0px;top:706px;width:1360px;height:1px;background:#e1e1e1;"></div>
<span class="t" style="left:7.5px;top:712.31px;font:400 11.8px/11.8px 'Liberation Sans', sans-serif;color:#262626;white-space:pre;transform-origin:0 50%;transform:scaleX(0.9251);">"ESTUDIO DE MERCADO 2022 septiembre": 4,120 caracteres (valor aproximado).</span>
<div style="left:1100px;top:706px;width:40px;height:22px;background:#c6c6c6;"></div>
<svg style="left:0px;top:0px;" width="1360" height="728" viewBox="0 0 1360 728"><path d="M1073.5 711.5C1076 710.6 1078 710.8 1079.5 712V721.5C1078 720.4 1076 720.2 1073.5 721ZM1085.5 711.5C1083 710.6 1081 710.8 1079.5 712V721.5C1081 720.4 1083 720.2 1085.5 721Z" fill="#f3f3f3" stroke="#666" stroke-width="1"/><path d="M1075 713.5H1078M1075 715.5H1078M1075 717.5H1078M1081 713.5H1084M1081 715.5H1084M1081 717.5H1084" stroke="#777" stroke-width="0.9"/><path d="M1078 722.5L1079.5 724L1081 722.5" fill="none" stroke="#666" stroke-width="1"/><rect x="1113.5" y="710.5" width="13" height="12" fill="none" stroke="#666" stroke-width="1.2"/><path d="M1115.5 712.7H1124.5M1115.5 714.7H1124.5M1115.5 716.6H1124.5M1115.5 718.5H1124.5M1115.5 720.5H1124.5" stroke="#666" stroke-width="0.9"/><path d="M1160 722.5H1153.5V710.5H1164.5V715" fill="#f3f3f3" stroke="#666" stroke-width="1"/><path d="M1155.5 713.5H1162.5M1155.5 715.5H1161M1155.5 717.5H1159" stroke="#666" stroke-width="1"/><circle cx="1163" cy="720" r="3.6" fill="#8a8a8a" stroke="#555" stroke-width="1"/><path d="M1160.6 719C1162 718 1163 719.6 1164.4 718.4M1161.6 722C1162.6 721 1164 722 1165.4 721" stroke="#f3f3f3" stroke-width="0.8" fill="none"/><path d="M1186 716.5H1194" stroke="#444" stroke-width="1"/><path d="M1199.5 716.5H1298.5" stroke="#666" stroke-width="1"/><rect x="1247.5" y="710.5" width="4.2" height="12" fill="#444"/><path d="M1304.5 716.5H1312.5M1308.5 712.5V720.5" stroke="#444" stroke-width="1"/></svg>
<span class="t" style="left:1325.5px;top:711.58px;font:400 11.6px/11.6px 'Liberation Sans', sans-serif;color:#262626;white-space:pre;transform-origin:0 50%;transform:scaleX(0.8936);">100%</span>
<!-- sec_taskbar -->
<div style="left:0px;top:728px;width:1360px;height:40px;background:#101010;"></div>
<div style="left:197px;top:728px;width:44px;height:40px;background:#2c2c2c;"></div>
<div style="left:241px;top:728px;width:1px;height:40px;background:#3a3a3a;"></div>
<div style="left:197px;top:766px;width:44px;height:2px;background:#76b9ed;"></div>
<div style="left:250px;top:766px;width:40px;height:2px;background:#76b9ed;"></div>
<div style="left:397px;top:766px;width:40px;height:2px;background:#76b9ed;"></div>
<div style="left:445.8px;top:766px;width:40.19999999999999px;height:2px;background:#76b9ed;"></div>
<div style="left:495px;top:766px;width:40px;height:2px;background:#76b9ed;"></div>
<div style="left:241px;top:766px;width:3px;height:2px;background:#4a7fb0;"></div>
<div style="left:281px;top:766px;width:9px;height:2px;background:#4a7fb0;"></div>
<svg style="left:0px;top:0px;" width="1360" height="768" viewBox="0 0 1360 768"><path d="M15.5 742.3L22.5 741.3V747.6H15.5ZM23.5 741.2L32.5 740V747.6H23.5ZM15.5 748.6H22.5V754.9L15.5 753.9ZM23.5 748.6H32.5V756.2L23.5 755Z" fill="#fff"/><circle cx="74.6" cy="745.6" r="5" fill="none" stroke="#fff" stroke-width="1.4"/><path d="M71 749.4L64.4 756" stroke="#fff" stroke-width="1.6"/><defs><linearGradient id="eg" x1="0" y1="0" x2="1" y2="1"><stop offset="0" stop-color="#35c1f1"/><stop offset="0.5" stop-color="#1f8fd6"/><stop offset="1" stop-color="#0c59a4"/></linearGradient><linearGradient id="eg2" x1="0" y1="0" x2="1" y2="0"><stop offset="0" stop-color="#2fc4b4"/><stop offset="1" stop-color="#5fe06a"/></linearGradient></defs><circle cx="122.8" cy="748" r="12" fill="url(#eg)"/><path d="M111 746C112 739.5 117 736 123 736C130 736 134.8 741 134.8 747C134.8 751 131.6 753 128.6 753C125.6 753 124.4 751.6 125.2 750.2C126 748.8 126.4 747.6 125.6 745.6C124.6 743.2 122 742 119.4 742C115.6 742 112.4 743.6 111 746Z" fill="url(#eg2)"/><path d="M117.6 748.4C117 752.6 119.6 757 124.6 758.6C121 759.6 116.6 758 114.2 754.6C112.8 752.4 112.6 749.6 113.6 747.4C114.6 745.4 116.8 744.6 118.6 745.2C118 746 117.8 747 117.6 748.4Z" fill="#0b4f96"/><circle cx="172" cy="748" r="11.3" fill="#fbc116"/><path d="M172 748L162.21 742.35A11.3 11.3 0 0 1 181.79 742.35Z" fill="#e33b2e"/><path d="M172 748L162.21 742.35A11.3 11.3 0 0 0 172.00 759.30Z" fill="#2da94f"/><circle cx="172" cy="748" r="5.20" fill="#fff"/><circle cx="172" cy="748" r="4.07" fill="#4a8af4"/><rect x="216" y="737" width="18" height="22" rx="1.5" fill="#2b7cd3"/><rect x="216" y="737" width="18" height="5.5" fill="#41a5ee"/><rect x="216" y="748" width="18" height="5.5" fill="#185abd"/><rect x="216" y="753.5" width="18" height="5.5" fill="#103f91"/><rect x="209" y="741.5" width="13" height="13" rx="1" fill="#185abd"/><path d="M259 739.5H266.5L268.5 741.5H280.5V758H259Z" fill="#f6c445"/><path d="M259 744H280.5V758H259Z" fill="#fcd75e"/><path d="M264 751H275.5V758H264Z" fill="#3b8fd6"/><path d="M267 754H272.5V758H267Z" fill="#fcd75e"/><rect x="313" y="737" width="18" height="22" rx="1.5" fill="#21a366"/><rect x="313" y="737" width="9" height="7.3" fill="#21a366"/><rect x="322" y="737" width="9" height="7.3" fill="#33c481"/><rect x="313" y="744.3" width="9" height="7.3" fill="#107c41"/><rect x="322" y="744.3" width="9" height="7.3" fill="#21a366"/><rect x="313" y="751.6" width="18" height="7.4" fill="#185c37"/><rect x="306" y="741.5" width="13" height="13" rx="1" fill="#107c41"/><defs><radialGradient id="ff" cx="0.6" cy="0.3" r="0.8"><stop offset="0" stop-color="#ffe14a"/><stop offset="0.45" stop-color="#ff8a1f"/><stop offset="1" stop-color="#e31587"/></radialGradient></defs><path d="M368 736.5C372 738 374 741 374.6 743C377 741 377.6 739 377.2 737C380.6 741 381 746 380 750C378.6 756 373.6 760 368 760C361.4 760 356 755 356 748.4C356 744.4 358 741.4 360.4 739.6C360.2 741.6 360.8 742.8 361.6 743.6C363.6 741.8 366.6 741 368 736.5Z" fill="url(#ff)"/><circle cx="368" cy="749" r="5.6" fill="#7a3ff2"/><path d="M362.4 749C362.4 746 365 743.4 368 743.4C371 743.4 372.6 745 373 746.4C371 745.6 369 746.4 368.6 748C368.2 750 366 750.6 362.4 749Z" fill="#ffb43a"/><circle cx="417.5" cy="747.5" r="11.5" fill="#fbc116"/><path d="M417.5 747.5L407.54 741.75A11.5 11.5 0 0 1 427.46 741.75Z" fill="#e33b2e"/><path d="M417.5 747.5L407.54 741.75A11.5 11.5 0 0 0 417.50 759.00Z" fill="#2da94f"/><circle cx="417.5" cy="747.5" r="5.29" fill="#fff"/><circle cx="417.5" cy="747.5" r="4.14" fill="#4a8af4"/><circle cx="424.5" cy="754" r="6.8" fill="#8f9398"/><circle cx="424.5" cy="754" r="6.8" fill="none" stroke="#c9cbce" stroke-width="0.8"/><path d="M421 751L423 754L420.4 757M428 751L426 754L428.6 757M424.5 750V758" stroke="#e8e8e8" stroke-width="1" fill="none"/><path d="M454 751C454 744.5 460 740.5 466.5 740.5C473 740.5 476.5 744 476.5 748C476.5 751 474 752 471.5 751.6C469.5 751.2 468.2 752.4 468.8 754.2C469.6 756.6 467.6 758.6 463.6 758.6C458 758.6 454 755.6 454 751Z" fill="#dfe6ee"/><circle cx="459" cy="748.5" r="1.8" fill="#e84b3c"/><circle cx="463.5" cy="745" r="1.8" fill="#f4c430"/><circle cx="469" cy="744.6" r="1.8" fill="#3aa655"/><circle cx="459.6" cy="753.6" r="1.8" fill="#3b8fd6"/><path d="M466.5 758L474.5 741.5L476.5 742.5L469 759Z" fill="#e09a4f"/><path d="M474.2 741.8L476 736.5L477.6 737.2L476.6 742.8Z" fill="#f1c27d"/><rect x="506" y="736" width="18.5" height="24" fill="#fff"/><rect x="508.5" y="738.5" width="13.5" height="4" fill="#101010"/><rect x="508.5" y="745.5" width="3.5" height="3" fill="#101010"/><rect x="513.5" y="745.5" width="3.5" height="3" fill="#101010"/><rect x="518.5" y="745.5" width="3.5" height="3" fill="#101010"/><rect x="508.5" y="750.1" width="3.5" height="3" fill="#101010"/><rect x="513.5" y="750.1" width="3.5" height="3" fill="#101010"/><rect x="518.5" y="750.1" width="3.5" height="3" fill="#101010"/><rect x="508.5" y="754.7" width="3.5" height="3" fill="#101010"/><rect x="513.5" y="754.7" width="3.5" height="3" fill="#101010"/><rect x="518.5" y="754.7" width="3.5" height="3" fill="#101010"/><path d="M1117 751L1123 744.5L1129 751" fill="none" stroke="#fff" stroke-width="1.3"/><g fill="none" stroke="#fff" stroke-width="1.1"><rect x="1142" y="744.5" width="7.5" height="7" rx="1.4"/><path d="M1149.5 747L1152.5 745V751L1149.5 749"/><path d="M1143.5 742C1145.5 740.4 1148.5 740.4 1150.5 742M1143.5 754C1145.5 755.6 1148.5 755.6 1150.5 754"/></g><g fill="none" stroke="#fff" stroke-width="1.1"><path d="M1166.5 742.5H1178.5V751.5H1166.5Z"/><path d="M1172.5 751.5V754.5M1169 754.5H1176"/><path d="M1163.5 741.5H1166.5V746H1163.5Z" fill="#101010"/><path d="M1164.8 746V749.5"/></g><g fill="none" stroke="#fff" stroke-width="1.1"><path d="M1187.5 745.5H1190L1193.5 742.5V754.5L1190 751.5H1187.5Z"/><path d="M1196 745.5C1197.2 747 1197.2 750 1196 751.5"/></g><g fill="none" stroke="#8a8a8a" stroke-width="1"><path d="M1198.5 743.5C1200.6 746 1200.6 751 1198.5 753.5"/><path d="M1201 741.5C1204 745 1204 752 1201 755.5"/></g><path d="M1319.5 740.5H1334.5V751.5H1329.5L1327 754.5L1324.5 751.5H1319.5Z" fill="none" stroke="#fff" stroke-width="1.1"/><path d="M1355.5 728V768" stroke="#5a5a5a" stroke-width="1"/></svg>
<span class="t" style="left:211.2px;top:745.21px;font:700 10.5px/10.5px 'Liberation Sans', sans-serif;color:#fff;white-space:pre;transform-origin:0 50%;transform:scaleX(0.8869);">W</span>
<span class="t" style="left:308.6px;top:745.21px;font:700 10.5px/10.5px 'Liberation Sans', sans-serif;color:#fff;white-space:pre;transform-origin:0 50%;transform:scaleX(1.1403);">X</span>
<span class="t" style="left:1215.5px;top:741.58px;font:400 11.6px/11.6px 'Liberation Sans', sans-serif;color:#fff;white-space:pre;transform-origin:0 50%;transform:scaleX(0.7887);">ESP</span>
<span class="t" style="left:1261px;top:733.31px;font:400 11.8px/11.8px 'Liberation Sans', sans-serif;color:#fff;white-space:pre;transform-origin:0 50%;transform:scaleX(0.9701);">11:49</span>
<span class="t" style="left:1248.8px;top:751.31px;font:400 11.8px/11.8px 'Liberation Sans', sans-serif;color:#fff;white-space:pre;transform-origin:0 50%;transform:scaleX(0.9946);">29/9/2022</span>
</body></html>
